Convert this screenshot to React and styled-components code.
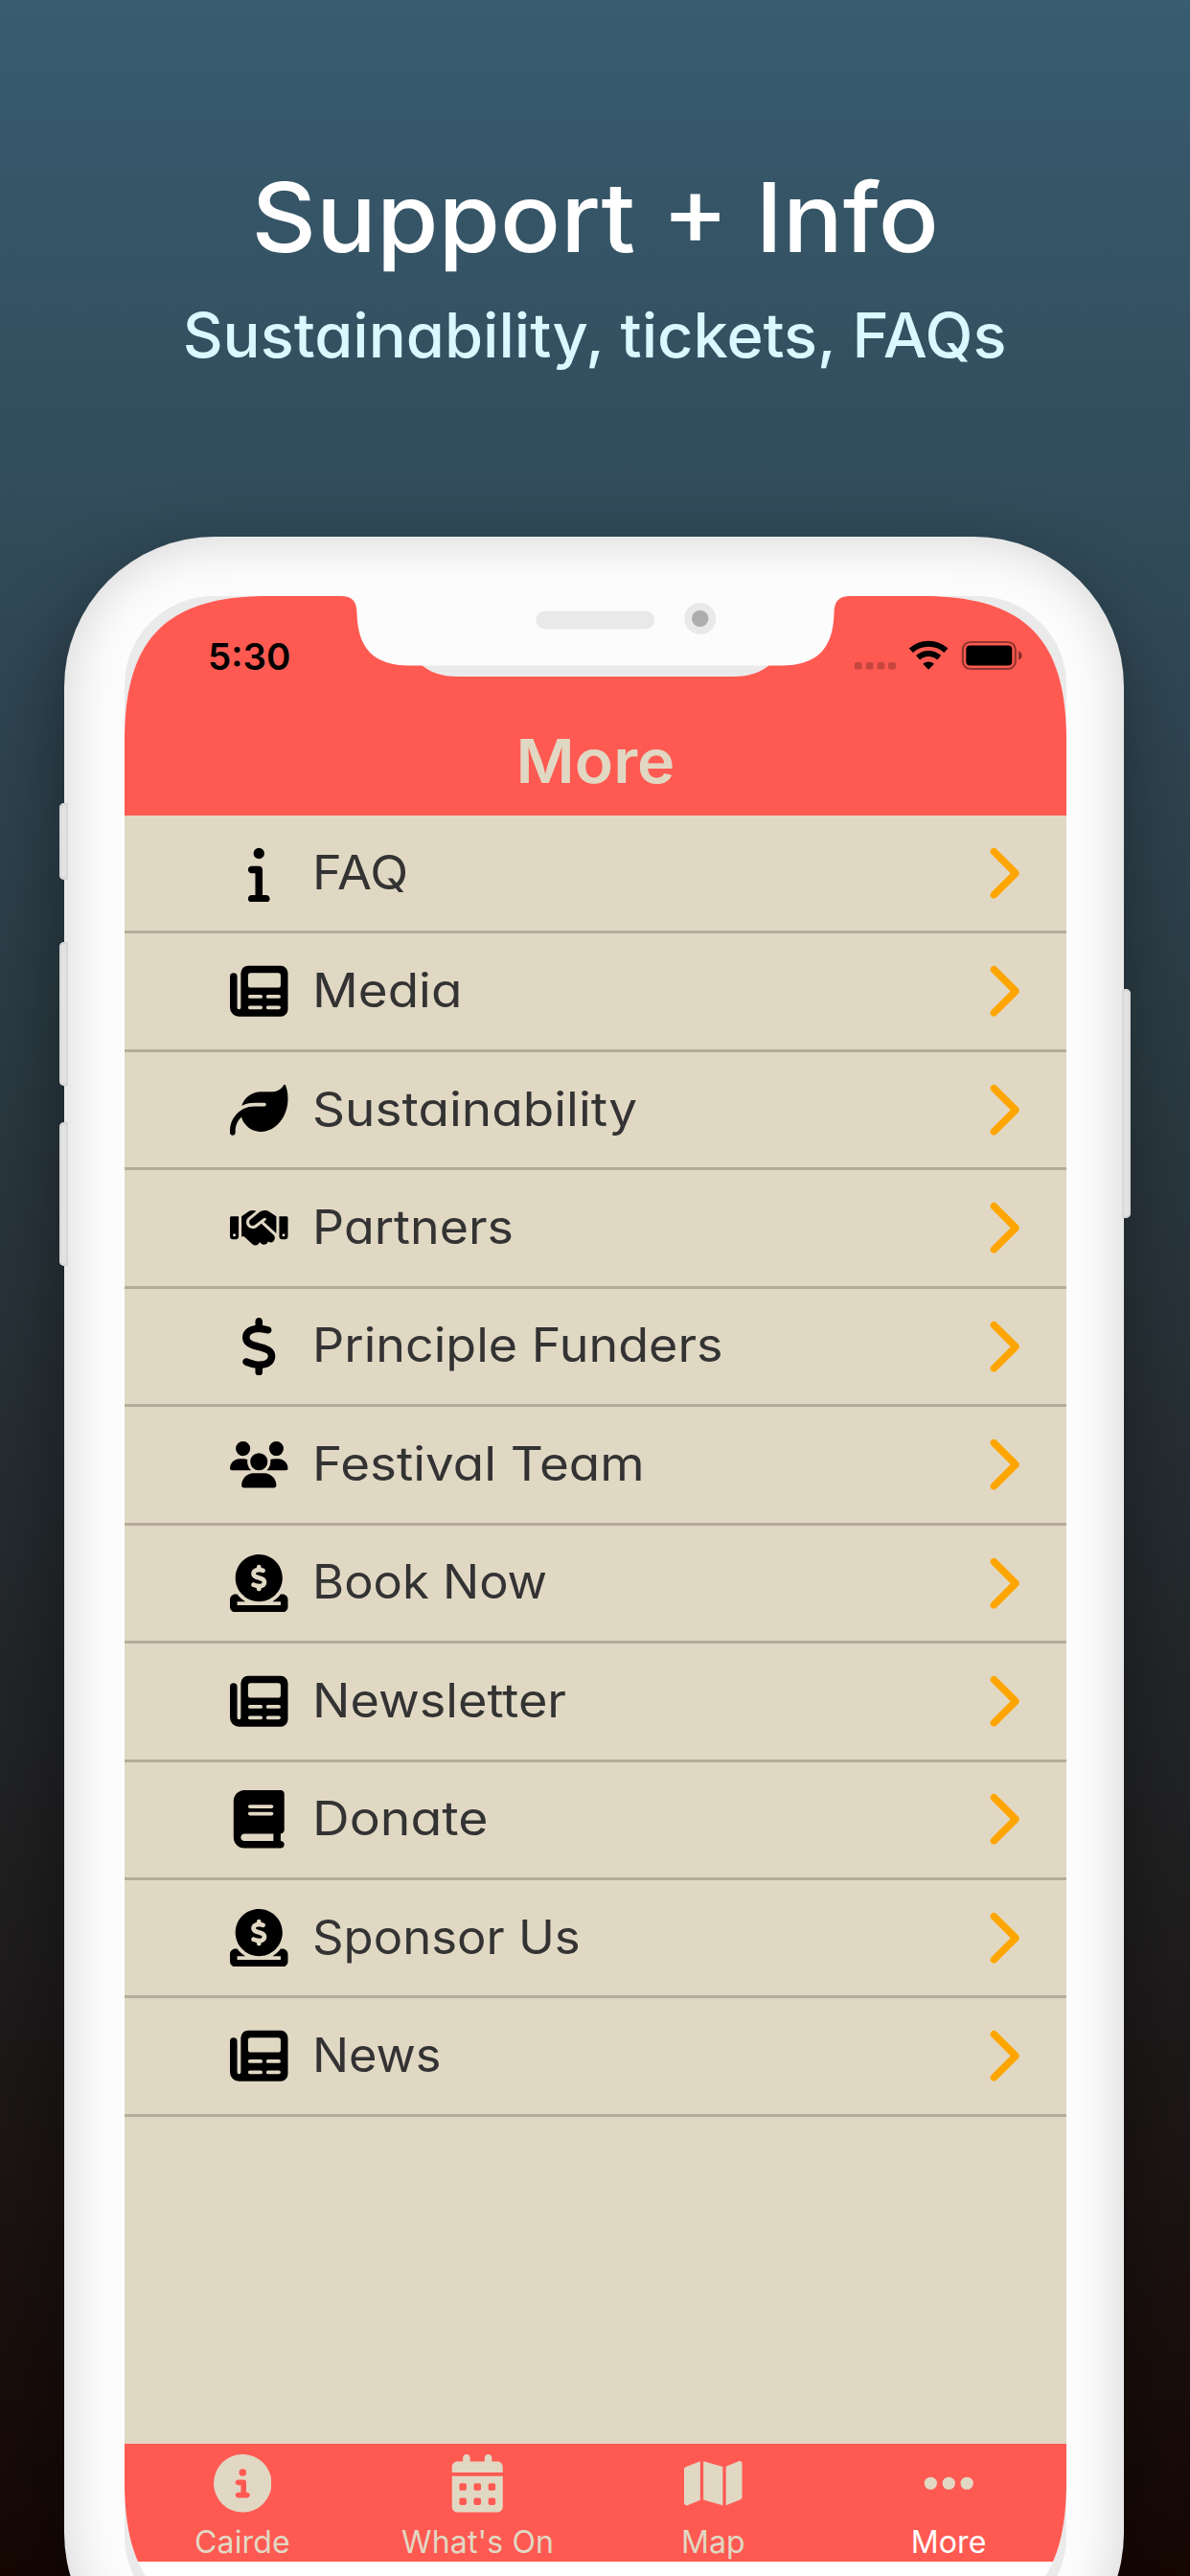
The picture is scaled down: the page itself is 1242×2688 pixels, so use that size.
import React from 'react';
import styled, { createGlobalStyle } from 'styled-components';
import {
  FaInfo, FaLeaf, FaHandshake, FaDollarSign, FaUsers, FaCircleDollarToSlot,
  FaBook, FaChevronRight, FaCircleInfo, FaCalendarDays, FaMap, FaEllipsis,
} from 'react-icons/fa6';

const RED = '#ff5a52';
const SAND = '#e1d8c4';

const GlobalStyle = createGlobalStyle`
  *, *::before, *::after { box-sizing: border-box; }
  html, body { margin: 0; padding: 0; }
  body { font-family: Inter, "Open Sans", sans-serif; }
  svg { display: block; }
`;

const Page = styled.main`
  width: 1242px;
  height: 2688px;
  overflow: hidden;
  display: flex;
  flex-direction: column;
  align-items: center;
  background: linear-gradient(180deg, #385c70 0%, #283339 50%, #160703 100%);
`;

const Hero = styled.header`
  width: 100%;
  height: 560px;
  padding-top: 167px;
  flex: none;
  display: flex;
  flex-direction: column;
  align-items: center;
  white-space: nowrap;
  font-feature-settings: "cv11";
`;

const Title = styled.h1`
  margin: 0;
  font-size: 100px;
  line-height: 120px;
  font-weight: 500;
  color: #fff;
  transform: scaleX(1.045);
`;

const Subtitle = styled.p`
  margin: 16px 0 0;
  font-size: 64px;
  line-height: 94px;
  font-weight: 500;
  color: #d9f8ff;
  transform: scaleX(1.015);
`;

const Phone = styled.section`
  position: relative;
  flex: none;
  width: 1106px;
  height: 2240px;
  margin-right: 2px;
  padding: 62px 60px 0 63px;
  border-radius: 157px;
  background: #fcfcfc;
  box-shadow: inset 0 0 50px 4px rgba(0, 0, 0, 0.15), -6px 30px 80px rgba(0, 0, 0, 0.4);
`;

const SideButton = styled.span`
  position: absolute;
  top: ${(p) => p.$top}px;
  ${(p) => (p.$right ? 'right: -7px' : 'left: -5px')};
  width: 9px;
  height: ${(p) => p.$height}px;
  border-radius: ${(p) => (p.$right ? '0 5px 5px 0' : '5px 0 0 5px')};
  background: #e6e6e6;
  box-shadow: inset 0 0 3px 2px #d4d4d4;
`;

const Bezel = styled.div`
  width: 983px;
  height: 2118px;
  border-radius: 93px;
  background: #eaeaea;
`;

const Screen = styled.div`
  position: relative;
  width: 983px;
  height: 2118px;
  display: flex;
  flex-direction: column;
  background: #fff;
  clip-path: path("M0 150 C0 44 44 0 150 0 H833 C939 0 983 44 983 150 V1968 C983 2074 939 2118 833 2118 H150 C44 2118 0 2074 0 1968 Z");
`;

const TopBar = styled.div`
  height: 229px;
  flex: none;
  background: ${RED};
  display: flex;
  flex-direction: column;
`;

const StatusBar = styled.div`
  height: 126px;
  padding: 39px 46px 0 87px;
  display: flex;
  justify-content: space-between;
`;

const Clock = styled.time`
  font-size: 38.5px;
  line-height: 48px;
  font-weight: 600;
  color: #000;
`;

const ScreenTitle = styled.h2`
  margin: 0;
  text-align: center;
  font-size: 63.5px;
  line-height: 92px;
  font-weight: 600;
  color: ${SAND};
  font-feature-settings: "cv11";
  transform: scaleX(1.045);
`;

const Notch = styled.div`
  position: absolute;
  left: 226px;
  top: 0;
`;

const Menu = styled.ul`
  list-style: none;
  margin: 0;
  padding: 0;
  height: 1699px;
  flex: none;
  background: ${SAND};
`;

const Row = styled.li`
  height: 123.45px;
  padding: 0 49px 0 110px;
  display: flex;
  align-items: center;
  border-bottom: 3px solid #b5ab9b;
`;

const IconBox = styled.span`
  flex: none;
  color: #000;
  svg { width: 60.5px; height: 60.5px; }
`;

const Label = styled.span`
  flex: 1;
  padding: 0 0 1px 25px;
  font-size: 49px;
  line-height: 76px;
  white-space: nowrap;
  color: #333;
  font-feature-settings: "cv11";
`;

const Stretch = styled.span`
  display: inline-block;
  transform: scaleX(${(p) => p.$by});
  transform-origin: 0 50%;
`;

const Chevron = styled(FaChevronRight)`
  height: 60.5px;
  width: 37.8px;
  color: #ffa500;
`;

const TabBar = styled.nav`
  height: 123px;
  flex: none;
  display: grid;
  grid-template-columns: repeat(4, 1fr);
  background: ${RED};
`;

const Tab = styled.div`
  padding-top: 11px;
  display: flex;
  flex-direction: column;
  align-items: center;
  color: ${SAND};
  svg { height: 60.5px; width: auto; }
`;

const TabLabel = styled.span`
  margin-top: 12px;
  font-size: 32px;
  line-height: 38px;
  letter-spacing: 0.15px;
  color: ${(p) => (p.$active ? '#fff' : SAND)};
`;

const StatusDrawing = styled.svg`
  margin-top: 4px;
`;

const Newspaper = () => (
  <svg viewBox="0 0 512 512" fill="currentColor">
    <path fillRule="evenodd" d="M160 32H448a64 64 0 0 1 64 64V416a64 64 0 0 1-64 64H80a80 80 0 0 1-80-80V128a32 32 0 0 1 64 0V400a16 16 0 0 0 32 0V96a64 64 0 0 1 64-64ZM184 96a24 24 0 0 0-24 24V200a24 24 0 0 0 24 24H424a24 24 0 0 0 24-24V120a24 24 0 0 0-24-24ZM176 288a16 16 0 0 0 0 32H272a16 16 0 0 0 0-32ZM336 288a16 16 0 0 0 0 32H432a16 16 0 0 0 0-32ZM176 384a16 16 0 0 0 0 32H272a16 16 0 0 0 0-32ZM336 384a16 16 0 0 0 0 32H432a16 16 0 0 0 0-32Z" />
  </svg>
);

const StatusIcons = () => (
  <StatusDrawing width="178" height="36" viewBox="889 665 178 36">
    <g fill="#000" opacity="0.22">
      <rect x="891.8" y="691" width="8" height="7.6" rx="2" />
      <rect x="903.6" y="691" width="8" height="7.6" rx="2" />
      <rect x="915.4" y="691" width="8" height="7.6" rx="2" />
      <rect x="927" y="691" width="8" height="7.6" rx="2" />
    </g>
    <g fill="none" stroke="#000" strokeWidth="6">
      <path d="M950.8 678.8a27 27 0 0 1 36.6 0" />
      <path d="M958 686.300a16.300 16.300 0 0 1 22.200 0" />
    </g>
    <path d="M963.200 692.800a8.800 8.800 0 0 1 11.800 0l-5.900 5.900z" />
    <rect x="1004.800" y="670" width="55" height="28" rx="8" fill="none" stroke="#000" strokeOpacity="0.42" strokeWidth="2.200" />
    <rect x="1008.300" y="673.500" width="48" height="21" rx="4" />
    <path d="M1063.200 679.500c4.500 1.500 4.500 7.700 0 9.200z" opacity="0.5" />
  </StatusDrawing>
);

const items = [
  { label: 'FAQ', Icon: FaInfo, stretch: 1.065 },
  { label: 'Media', Icon: Newspaper, stretch: 1.08 },
  { label: 'Sustainability', Icon: FaLeaf, stretch: 1.084 },
  { label: 'Partners', Icon: FaHandshake, stretch: 1.06 },
  { label: 'Principle Funders', Icon: FaDollarSign, stretch: 1.062 },
  { label: 'Festival Team', Icon: FaUsers, stretch: 1.08 },
  { label: 'Book Now', Icon: FaCircleDollarToSlot, stretch: 1.034 },
  { label: 'Newsletter', Icon: Newspaper, stretch: 1.067 },
  { label: 'Donate', Icon: FaBook, stretch: 1.093 },
  { label: 'Sponsor Us', Icon: FaCircleDollarToSlot, stretch: 1.037 },
  { label: 'News', Icon: Newspaper, stretch: 1.03 },
];

const tabs = [
  { label: 'Cairde', Icon: FaCircleInfo },
  { label: "What's On", Icon: FaCalendarDays },
  { label: 'Map', Icon: FaMap },
  { label: 'More', Icon: FaEllipsis, active: true },
];

export default function App() {
  return (
    <>
      <GlobalStyle />
      <Page>
        <Hero>
          <Title>Support + Info</Title>
          <Subtitle>Sustainability, tickets, FAQs</Subtitle>
        </Hero>
        <Phone>
          <SideButton $top={278} $height={80} />
          <SideButton $top={423} $height={150} />
          <SideButton $top={611} $height={150} />
          <SideButton $right $top={472} $height={239} />
          <Bezel>
            <Screen>
              <TopBar>
                <StatusBar>
                  <Clock>5:30</Clock>
                  <StatusIcons />
                </StatusBar>
                <ScreenTitle>More</ScreenTitle>
              </TopBar>
              <Menu>
                {items.map(({ label, Icon, stretch }) => (
                  <Row key={label}>
                    <IconBox><Icon /></IconBox>
                    <Label><Stretch $by={stretch}>{label}</Stretch></Label>
                    <Chevron />
                  </Row>
                ))}
              </Menu>
              <TabBar>
                {tabs.map(({ label, Icon, active }) => (
                  <Tab key={label}>
                    <Icon />
                    <TabLabel $active={active}>{label}</TabLabel>
                  </Tab>
                ))}
              </TabBar>
              <Notch>
                <svg width="532" height="86" viewBox="356 622 532 86">
                  <path fill="#eaeaea" d="M438 692Q452 706 478 706H765Q791 706 805 692Z" />
                  <path fill="#fcfcfc" d="M356 622C367 622 372.500 627 372.500 640C373.500 676 389 694.500 428 694.500H815C854 694.500 869.500 676 870.500 640C870.500 627 876 622 887 622Z" />
                  <rect x="559.500" y="637.500" width="123.500" height="19" rx="9" fill="#e9e9e9" />
                  <circle cx="730.700" cy="645.400" r="16.500" fill="#e9e9e9" />
                  <circle cx="730.700" cy="645.400" r="8.700" fill="#adadad" />
                </svg>
              </Notch>
            </Screen>
          </Bezel>
        </Phone>
      </Page>
    </>
  );
}
